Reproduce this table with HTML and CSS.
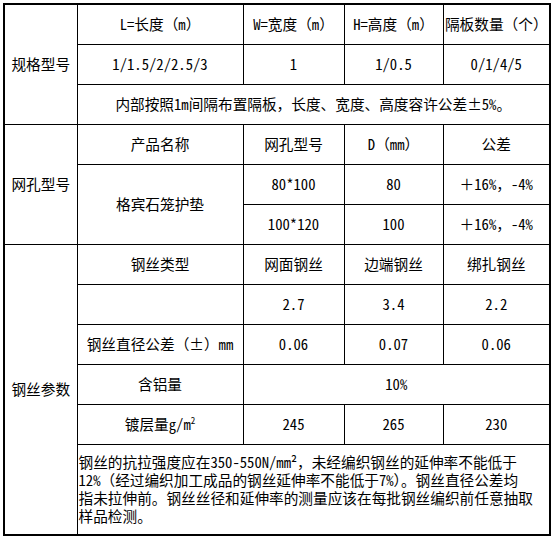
FILE: index.html
```html
<!DOCTYPE html>
<html lang="zh-CN">
<head>
<meta charset="utf-8">
<title>格宾石笼护垫规格</title>
<link rel="stylesheet" href="styles.css">
</head>
<body>
<table class="spec">
  <colgroup>
    <col class="c1"><col class="c2"><col class="c3"><col class="c4"><col class="c5">
  </colgroup>
  <tbody>
    <tr class="row">
      <th rowspan="3" class="label">规格型号</th>
      <td>L=长度（m）</td>
      <td>W=宽度（m）</td>
      <td>H=高度（m）</td>
      <td>隔板数量（个）</td>
    </tr>
    <tr class="row">
      <td>1/1.5/2/2.5/3</td>
      <td>1</td>
      <td>1/0.5</td>
      <td>0/1/4/5</td>
    </tr>
    <tr class="row">
      <td colspan="4">内部按照1m间隔布置隔板，长度、宽度、高度容许公差±5%。</td>
    </tr>
    <tr class="row">
      <th rowspan="3" class="label">网孔型号</th>
      <td>产品名称</td>
      <td>网孔型号</td>
      <td>D（mm）</td>
      <td>公差</td>
    </tr>
    <tr class="row">
      <td rowspan="2">格宾石笼护垫</td>
      <td>80*100</td>
      <td>80</td>
      <td>＋16%，-4%</td>
    </tr>
    <tr class="row">
      <td>100*120</td>
      <td>100</td>
      <td>＋16%，-4%</td>
    </tr>
    <tr class="row">
      <th rowspan="6" class="label">钢丝参数</th>
      <td>钢丝类型</td>
      <td>网面钢丝</td>
      <td>边端钢丝</td>
      <td>绑扎钢丝</td>
    </tr>
    <tr class="row">
      <td></td>
      <td>2.7</td>
      <td>3.4</td>
      <td>2.2</td>
    </tr>
    <tr class="row">
      <td>钢丝直径公差（±）mm</td>
      <td>0.06</td>
      <td>0.07</td>
      <td>0.06</td>
    </tr>
    <tr class="row">
      <td>含铝量</td>
      <td colspan="3">10%</td>
    </tr>
    <tr class="row">
      <td>镀层量g/m<sup class="sq">2</sup></td>
      <td>245</td>
      <td>265</td>
      <td>230</td>
    </tr>
    <tr class="row-note">
      <td colspan="4" class="note">钢丝的抗拉强度应在350-550N/mm²，未经编织钢丝的延伸率不能低于<br>12%（经过编织加工成品的钢丝延伸率不能低于7%）。钢丝直径公差均<br>指未拉伸前。钢丝丝径和延伸率的测量应该在每批钢丝编织前任意抽取<br>样品检测。</td>
    </tr>
  </tbody>
</table>
</body>
</html>
```

FILE: styles.css
```css
html, body {
  background: #ffffff;
}

body {
  margin: 3px;
  font-family: "Noto Sans Mono CJK SC", "Noto Sans CJK SC", sans-serif;
  font-size: 14.67px;
  color: #000000;
}

.spec {
  border-collapse: collapse;
  table-layout: fixed;
  width: 546px;
  border: 2px solid #000000;
}

.c1 { width: 73px; }
.c2 { width: 166px; }
.c3 { width: 101px; }
.c4 { width: 99px; }
.c5 { width: 107px; }

.spec td,
.spec th {
  border: 1px solid #000000;
  padding: 0;
  text-align: center;
  vertical-align: middle;
  font-weight: normal;
  line-height: 18px;
  white-space: nowrap;
}

.row {
  height: 40px;
}

.row-note {
  height: 91px;
}

.spec .note {
  text-align: left;
  white-space: nowrap;
  padding: 0 2px 0 1px;
  line-height: 18px;
}

.sq {
  font-size: 9px;
  vertical-align: 6px;
  line-height: 0;
}
```
